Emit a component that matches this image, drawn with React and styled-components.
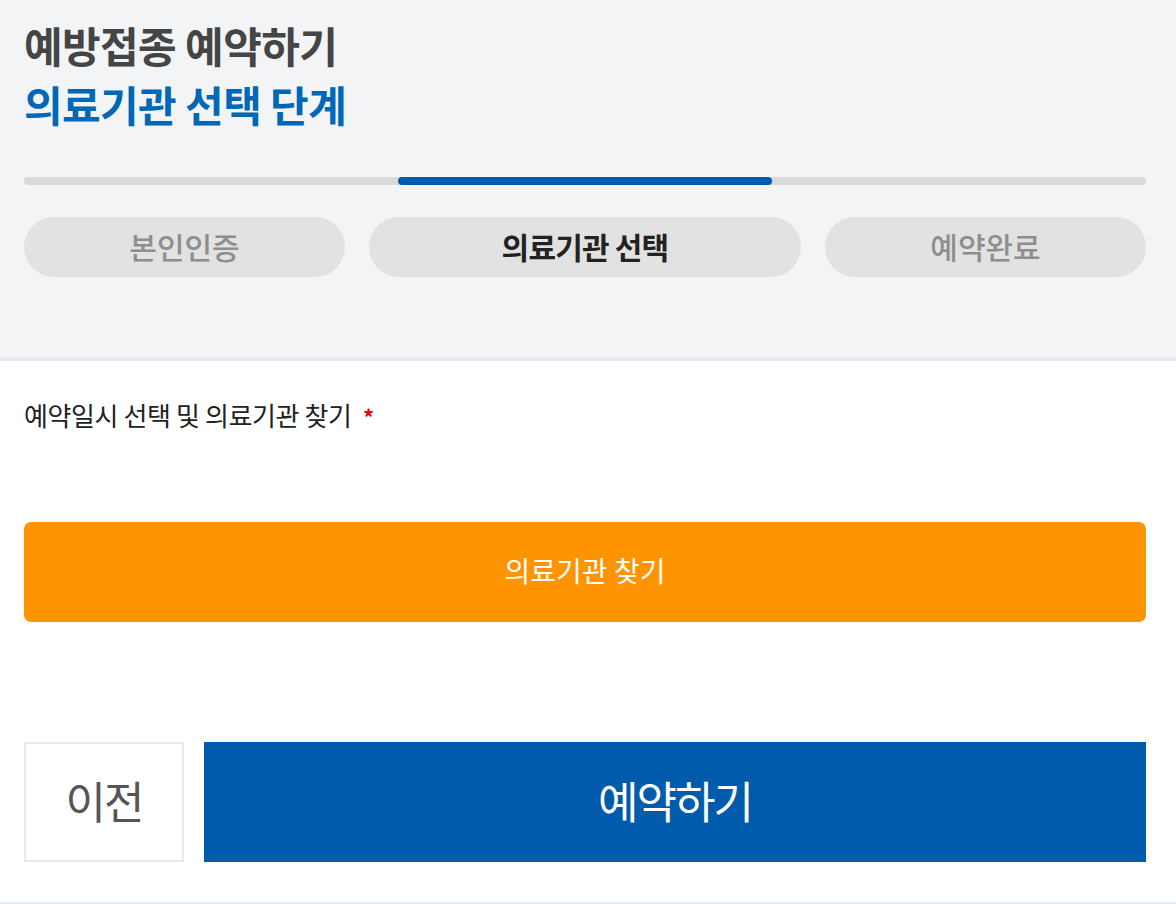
import styled, { createGlobalStyle } from 'styled-components';

const steps = [
  { label: '본인인증', width: 321 },
  { label: '의료기관 선택', width: 432, active: true },
  { label: '예약완료', width: 321 },
];

const App = () => {
  return (
    <>
      <GlobalStyle />
      <Page>
        <Header>
          <Title>예방접종 예약하기</Title>
          <StepTitle>의료기관 선택 단계</StepTitle>
          <Track>
            <TrackFill />
          </Track>
          <StepRow>
            {steps.map((step) => (
              <StepPill key={step.label} $width={step.width} $active={step.active}>
                {step.label}
              </StepPill>
            ))}
          </StepRow>
        </Header>
        <Body>
          <FieldLabel>
            예약일시 선택 및 의료기관 찾기 <Required>*</Required>
          </FieldLabel>
          <FindButton type="button">의료기관 찾기</FindButton>
          <Actions>
            <PrevButton type="button">이전</PrevButton>
            <SubmitButton type="button">예약하기</SubmitButton>
          </Actions>
        </Body>
      </Page>
    </>
  );
};

export default App;

const GlobalStyle = createGlobalStyle`
  * { box-sizing: border-box; }
  body {
    margin: 0;
    background: #fff;
    font-family: "Noto Sans CJK KR", "Noto Sans", sans-serif;
  }
`;

const Page = styled.div`
  width: 1176px;
  min-height: 904px;
  display: flex;
  flex-direction: column;
  border-bottom: 2px solid #e6e8f4;
`;

const Header = styled.header`
  background: #f3f4f6;
  padding: 15px 30px 80px 24px;
  border-bottom: 4px solid #e6e8f4;
`;

const Title = styled.h1`
  margin: 0;
  font-size: 42px;
  line-height: 59px;
  font-weight: 700;
  letter-spacing: -0.6px;
  color: #454545;
`;

const StepTitle = styled(Title)`
  color: #0068b7;
`;

const Track = styled.div`
  margin-top: 44px;
  height: 8px;
  border-radius: 4px;
  background: #d9d9d9;
  display: flex;
  padding-left: 374px;
`;

const TrackFill = styled.div`
  width: 374px;
  height: 8px;
  border-radius: 4px;
  background: #005bac;
`;

const StepRow = styled.div`
  margin-top: 32px;
  display: flex;
  gap: 24px;
`;

const StepPill = styled.div`
  width: ${(p) => p.$width}px;
  height: 60px;
  border-radius: 30px;
  background: #e2e2e2;
  display: flex;
  align-items: center;
  justify-content: center;
  padding-bottom: 2px;
  font-size: 30px;
  font-weight: ${(p) => (p.$active ? 700 : 500)};
  letter-spacing: ${(p) => (p.$active ? '-0.8px' : '0')};
  color: ${(p) => (p.$active ? '#222' : '#8e8e8e')};
`;

const Body = styled.main`
  flex: 1;
  padding: 36px 30px 40px 24px;
  display: flex;
  flex-direction: column;
`;

const FieldLabel = styled.h2`
  margin: 0;
  font-size: 26px;
  line-height: 36px;
  font-weight: 400;
  letter-spacing: -0.4px;
  color: #222;
`;

const Required = styled.span`
  color: #e60012;
  font-size: 22px;
  font-weight: 700;
  margin-left: 6px;
`;

const FindButton = styled.button`
  margin-top: 88px;
  height: 100px;
  padding-bottom: 6px;
  border: none;
  border-radius: 7px;
  background: #ff9400;
  color: #fff;
  font-family: inherit;
  font-size: 28px;
  font-weight: 400;
  letter-spacing: 0;
`;

const Actions = styled.div`
  margin-top: 120px;
  display: flex;
  gap: 20px;
`;

const PrevButton = styled.button`
  width: 160px;
  height: 120px;
  padding-bottom: 6px;
  background: #fff;
  border: 2px solid #e6e8f4;
  color: #555;
  font-family: inherit;
  font-size: 44px;
  font-weight: 400;
  letter-spacing: -2px;
`;

const SubmitButton = styled.button`
  flex: 1;
  height: 120px;
  padding-bottom: 6px;
  border: none;
  background: #005bac;
  color: #fff;
  font-family: inherit;
  font-size: 44px;
  font-weight: 400;
  letter-spacing: -2px;
`;
